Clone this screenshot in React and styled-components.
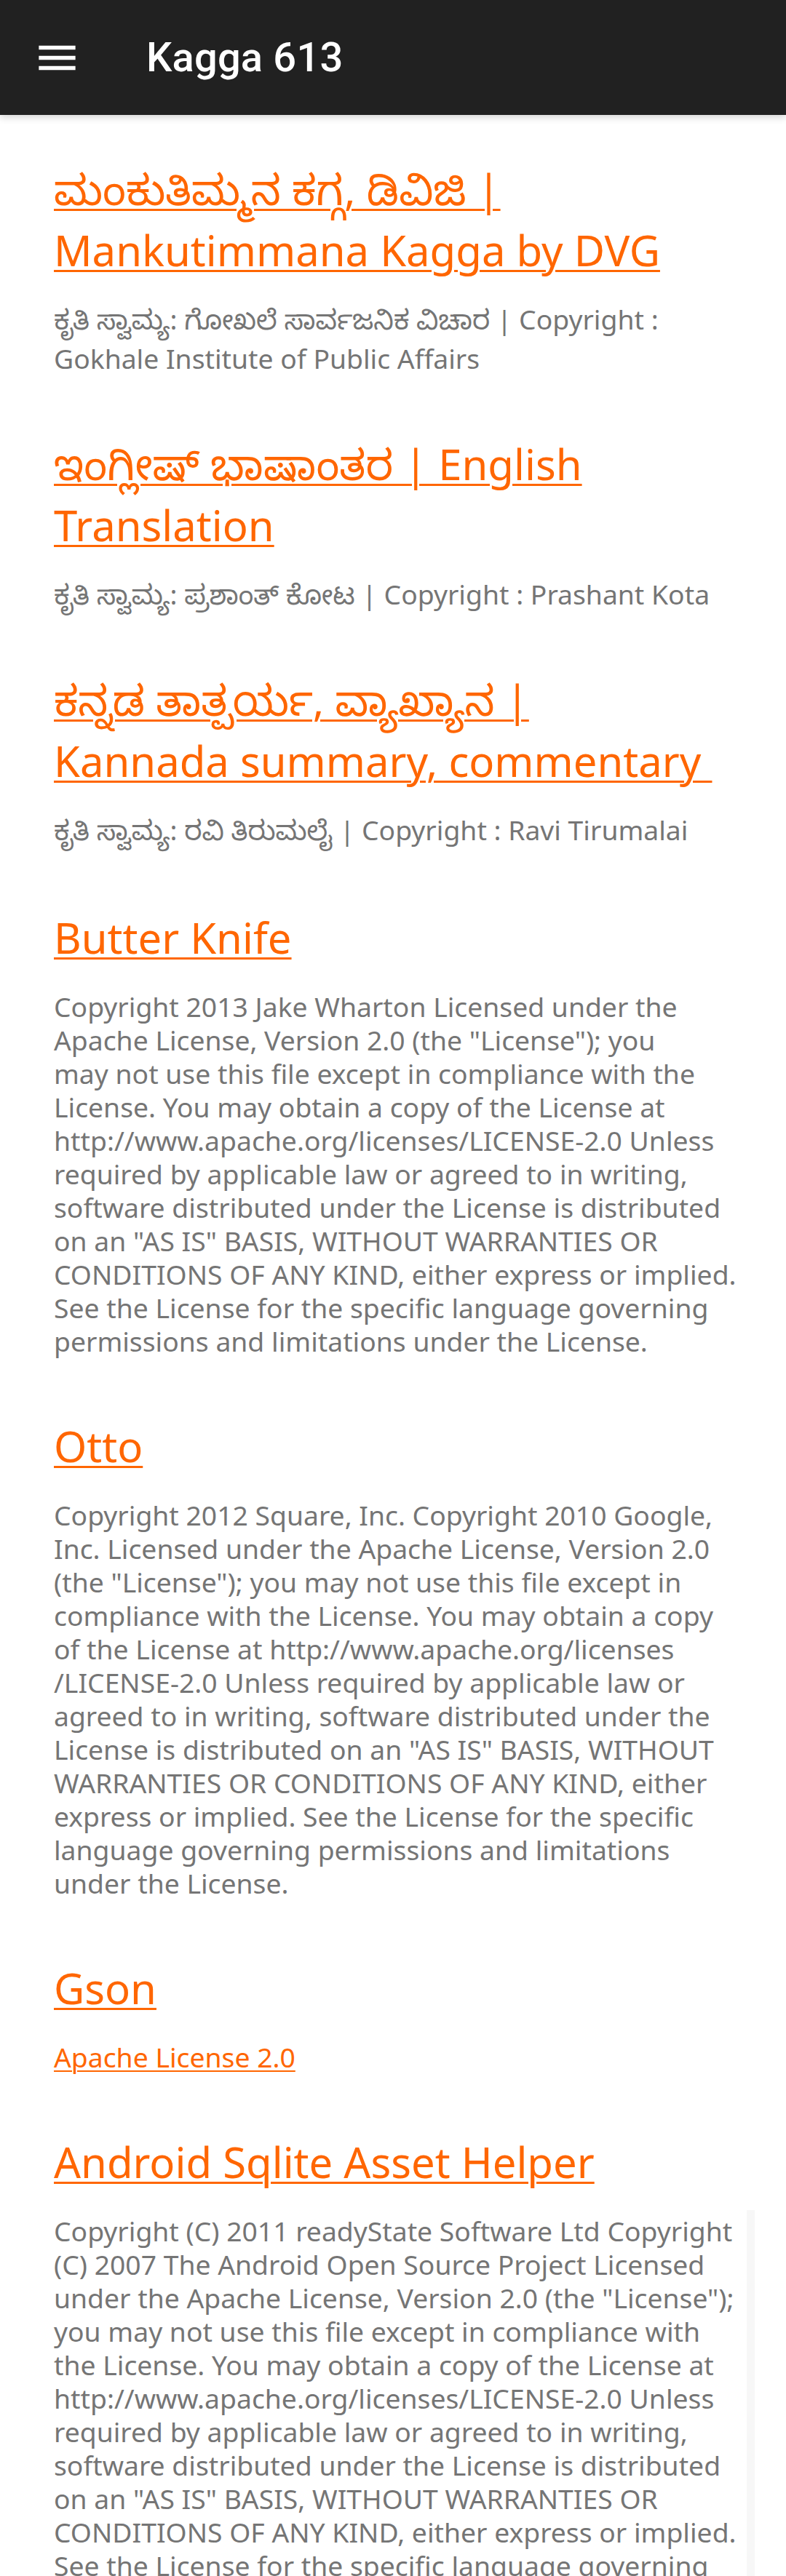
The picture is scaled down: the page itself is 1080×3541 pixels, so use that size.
import React from "react";
import styled, { createGlobalStyle } from "styled-components";

const GlobalStyle = createGlobalStyle`
  html, body {
    margin: 0;
    padding: 0;
    background: #ffffff;
  }
  body {
    font-family: "Noto Sans", "Noto Sans Kannada", "Lohit Kannada", Roboto, sans-serif;
  }
`;

const Page = styled.div`
  position: relative;
  width: 1080px;
  min-height: 3541px;
  background: #ffffff;
`;

const AppBar = styled.header`
  display: flex;
  align-items: center;
  height: 158px;
  padding-left: 45px;
  background: #212121;
  box-shadow: 0 3px 10px rgba(0, 0, 0, 0.18);
  position: relative;
  z-index: 1;
`;

const MenuButton = styled.button`
  display: flex;
  align-items: center;
  justify-content: center;
  width: 67px;
  height: 67px;
  padding: 0;
  border: none;
  background: transparent;
  cursor: pointer;
`;

const Title = styled.h1`
  margin: 0 0 0 89px;
  font-family: Roboto, "Noto Sans", sans-serif;
  font-weight: 500;
  font-size: 56px;
  color: #ffffff;
  letter-spacing: 0.2px;
`;

const Main = styled.main`
  padding: 60px 30px 0 74px;
`;

const Section = styled.section`
  display: flex;
  flex-direction: column;
  align-items: flex-start;
  gap: ${props => props.$gap}px;
  margin-top: ${props => props.$space}px;
  &:first-child {
    margin-top: 0;
  }
`;

const Heading = styled.a`
  display: block;
  font-size: 58px;
  line-height: 84px;
  color: #ff6600;
  text-decoration: underline;
  text-decoration-thickness: 3px;
  text-underline-offset: 5px;
  white-space: pre;
  cursor: pointer;
`;

const Notice = styled.p`
  margin: 0;
  font-size: 37.3px;
  line-height: ${props => props.$line}px;
  color: #757575;
  white-space: pre;
`;

const LicenseLink = styled.a`
  display: block;
  font-size: 37.3px;
  line-height: 46px;
  color: #ff6600;
  text-decoration: underline;
  text-decoration-thickness: 2px;
  text-underline-offset: 4px;
  cursor: pointer;
`;

const ScrollEdge = styled.div`
  position: absolute;
  left: 1026px;
  top: 3038px;
  bottom: 0;
  width: 11px;
  background: #f7f7f7;
`;

const MenuIcon = () => (
  <svg width="67" height="67" viewBox="0 0 24 24" fill="#ffffff">
    <path d="M3 18h18v-2H3v2zm0-5h18v-2H3v2zm0-7v2h18V6H3z" />
  </svg>
);

const sources = [
  {
    title: "ಮಂಕುತಿಮ್ಮನ ಕಗ್ಗ, ಡಿವಿಜಿ |\nMankutimmana Kagga by DVG",
    copyright:
      "ಕೃತಿ ಸ್ವಾಮ್ಯ: ಗೋಖಲೆ ಸಾರ್ವಜನಿಕ ವಿಚಾರ | Copyright :\nGokhale Institute of Public Affairs"
  },
  {
    title: "ಇಂಗ್ಲೀಷ್ ಭಾಷಾಂತರ | English\nTranslation",
    copyright: "ಕೃತಿ ಸ್ವಾಮ್ಯ: ಪ್ರಶಾಂತ್ ಕೋಟ | Copyright : Prashant Kota"
  },
  {
    title: "ಕನ್ನಡ ತಾತ್ಪರ್ಯ, ವ್ಯಾಖ್ಯಾನ |\nKannada summary, commentary ",
    copyright: "ಕೃತಿ ಸ್ವಾಮ್ಯ: ರವಿ ತಿರುಮಲೈ | Copyright : Ravi Tirumalai"
  }
];

const libraries = [
  {
    name: "Butter Knife",
    text: [
      "Copyright 2013 Jake Wharton Licensed under the",
      'Apache License, Version 2.0 (the "License"); you',
      "may not use this file except in compliance with the",
      "License. You may obtain a copy of the License at",
      "http://www.apache.org/licenses/LICENSE-2.0 Unless",
      "required by applicable law or agreed to in writing,",
      "software distributed under the License is distributed",
      'on an "AS IS" BASIS, WITHOUT WARRANTIES OR',
      "CONDITIONS OF ANY KIND, either express or implied.",
      "See the License for the specific language governing",
      "permissions and limitations under the License."
    ]
  },
  {
    name: "Otto",
    text: [
      "Copyright 2012 Square, Inc. Copyright 2010 Google,",
      "Inc. Licensed under the Apache License, Version 2.0",
      '(the "License"); you may not use this file except in',
      "compliance with the License. You may obtain a copy",
      "of the License at http://www.apache.org/licenses",
      "/LICENSE-2.0 Unless required by applicable law or",
      "agreed to in writing, software distributed under the",
      'License is distributed on an "AS IS" BASIS, WITHOUT',
      "WARRANTIES OR CONDITIONS OF ANY KIND, either",
      "express or implied. See the License for the specific",
      "language governing permissions and limitations",
      "under the License."
    ]
  },
  {
    name: "Gson",
    link: "Apache License 2.0"
  },
  {
    name: "Android Sqlite Asset Helper",
    text: [
      "Copyright (C) 2011 readyState Software Ltd Copyright",
      "(C) 2007 The Android Open Source Project Licensed",
      'under the Apache License, Version 2.0 (the "License");',
      "you may not use this file except in compliance with",
      "the License. You may obtain a copy of the License at",
      "http://www.apache.org/licenses/LICENSE-2.0 Unless",
      "required by applicable law or agreed to in writing,",
      "software distributed under the License is distributed",
      'on an "AS IS" BASIS, WITHOUT WARRANTIES OR',
      "CONDITIONS OF ANY KIND, either express or implied.",
      "See the License for the specific language governing",
      "permissions and limitations under the License."
    ]
  }
];

export default function App() {
  return (
    <Page>
      <GlobalStyle />
      <AppBar>
        <MenuButton aria-label="menu">
          <MenuIcon />
        </MenuButton>
        <Title>Kagga 613</Title>
      </AppBar>
      <Main>
        {sources.map(s => (
          <Section key={s.title} $gap={26} $space={76}>
            <Heading>{s.title}</Heading>
            <Notice $line={54}>{s.copyright}</Notice>
          </Section>
        ))}
        {libraries.map(lib => (
          <Section key={lib.name} $gap={30} $space={79}>
            <Heading>{lib.name}</Heading>
            {lib.link ? (
              <LicenseLink>{lib.link}</LicenseLink>
            ) : (
              <Notice $line={46}>{lib.text.join("\n")}</Notice>
            )}
          </Section>
        ))}
      </Main>
      <ScrollEdge />
    </Page>
  );
}
